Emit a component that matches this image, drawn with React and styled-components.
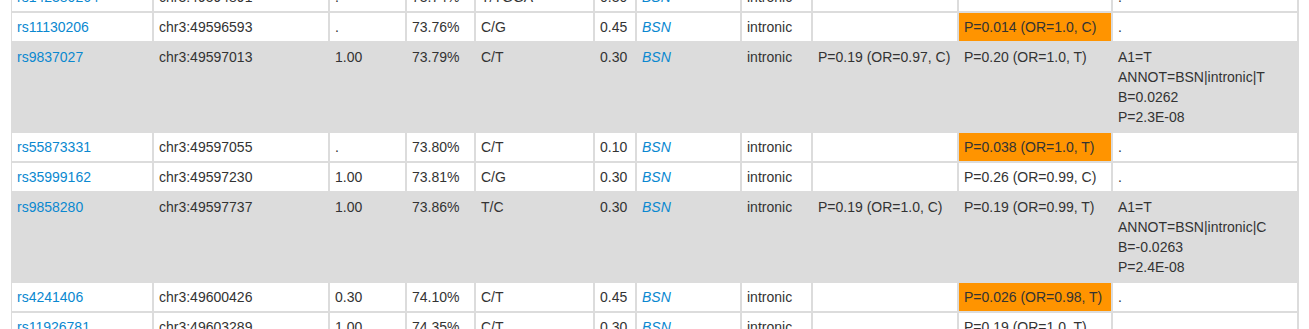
import React from 'react';
import styled, { createGlobalStyle } from 'styled-components';

const GlobalStyle = createGlobalStyle`
  html, body {
    margin: 0;
    padding: 0;
    background: #fff;
    overflow: hidden;
  }
  body {
    font-family: 'Liberation Sans', Arial, sans-serif;
  }
`;

const widths = [140, 174, 75, 67, 117, 40, 103, 69, 144, 152, 184];

const rows = [
  { id: 'rs142380264', pos: 'chr3:49594891', r2: '.', freq: '73.74%', alleles: 'T/TGGA', maf: '0.30', func: 'intronic', p1: '', p2: '', info: ['.'] },
  { id: 'rs11130206', pos: 'chr3:49596593', r2: '.', freq: '73.76%', alleles: 'C/G', maf: '0.45', func: 'intronic', p1: '', p2: 'P=0.014 (OR=1.0, C)', hit: true, info: ['.'] },
  { id: 'rs9837027', pos: 'chr3:49597013', r2: '1.00', freq: '73.79%', alleles: 'C/T', maf: '0.30', func: 'intronic', p1: 'P=0.19 (OR=0.97, C)', p2: 'P=0.20 (OR=1.0, T)', shade: true, info: ['A1=T', 'ANNOT=BSN|intronic|T', 'B=0.0262', 'P=2.3E-08'] },
  { id: 'rs55873331', pos: 'chr3:49597055', r2: '.', freq: '73.80%', alleles: 'C/T', maf: '0.10', func: 'intronic', p1: '', p2: 'P=0.038 (OR=1.0, T)', hit: true, info: ['.'] },
  { id: 'rs35999162', pos: 'chr3:49597230', r2: '1.00', freq: '73.81%', alleles: 'C/G', maf: '0.30', func: 'intronic', p1: '', p2: 'P=0.26 (OR=0.99, C)', info: ['.'] },
  { id: 'rs9858280', pos: 'chr3:49597737', r2: '1.00', freq: '73.86%', alleles: 'T/C', maf: '0.30', func: 'intronic', p1: 'P=0.19 (OR=1.0, C)', p2: 'P=0.19 (OR=0.99, T)', shade: true, info: ['A1=T', 'ANNOT=BSN|intronic|C', 'B=-0.0263', 'P=2.4E-08'] },
  { id: 'rs4241406', pos: 'chr3:49600426', r2: '0.30', freq: '74.10%', alleles: 'C/T', maf: '0.45', func: 'intronic', p1: '', p2: 'P=0.026 (OR=0.98, T)', hit: true, info: ['.'] },
  { id: 'rs11926781', pos: 'chr3:49603289', r2: '1.00', freq: '74.35%', alleles: 'C/T', maf: '0.30', func: 'intronic', p1: '', p2: 'P=0.19 (OR=1.0, T)', info: ['.'] },
];

export default function App() {
  return (
    <>
      <GlobalStyle />
      <Frame>
        <SnpTable>
          <colgroup>
            {widths.map((w, i) => <col key={i} style={{ width: w }} />)}
          </colgroup>
          <tbody>
            {rows.map(r => (
              <Row key={r.id} $shade={r.shade}>
                <Cell><Link href="#">{r.id}</Link></Cell>
                <Cell>{r.pos}</Cell>
                <Cell>{r.r2}</Cell>
                <Cell>{r.freq}</Cell>
                <Cell>{r.alleles}</Cell>
                <Cell>{r.maf}</Cell>
                <Cell><Gene href="#">BSN</Gene></Cell>
                <Cell>{r.func}</Cell>
                <Cell>{r.p1}</Cell>
                <Cell $hit={r.hit}>{r.p2}</Cell>
                <Cell>
                  {r.info.map((line, i) => <InfoLine key={i}>{line}</InfoLine>)}
                </Cell>
              </Row>
            ))}
          </tbody>
        </SnpTable>
      </Frame>
    </>
  );
}

// scrolled view: table is cut off at the top, like the page was scrolled
const Frame = styled.div`
  margin-left: 11px;
  margin-top: -19px;
  overflow: hidden;
  width: 1288px;
`;

const SnpTable = styled.table`
  margin-left: -1px;
  table-layout: fixed;
  width: 1289px;
  border-collapse: separate;
  border-spacing: 2px;
  background: #dcdcdc;
  font-size: 14px;
  line-height: 20px;
  color: #333;
`;

const Row = styled.tr`
  td {
    background: ${p => (p.$shade ? '#dcdcdc' : '#fff')};
  }
`;

const Cell = styled.td`
  box-sizing: border-box;
  padding: 4px 5px;
  vertical-align: top;
  white-space: nowrap;
  overflow: hidden;
  && {
    ${p => p.$hit && 'background: #ff9400;'}
  }
`;

const Link = styled.a`
  color: #0a88d0;
  text-decoration: none;
`;

const Gene = styled(Link)`
  font-style: italic;
`;

const InfoLine = styled.div`
  line-height: 20px;
`;
